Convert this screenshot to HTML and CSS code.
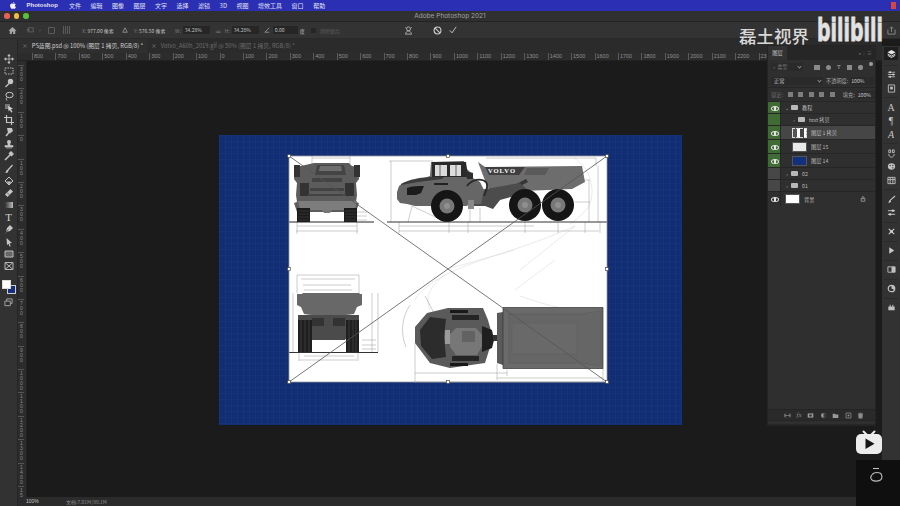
FILE: index.html
```html
<!DOCTYPE html>
<html lang="zh">
<head>
<meta charset="utf-8">
<title>Adobe Photoshop 2021</title>
<link rel="stylesheet" href="styles.css">
</head>
<body>
<div class="app">
  <header class="menubar">
    <svg class="apple" viewBox="0 0 10 12"><path d="M7 0c0 1.300-1 2.600-2.300 2.500C4.600 1.300 5.700.1 7 0zM5 3.200c.6 0 1.300-.6 2.400-.6 1 0 1.800.5 2.300 1.200-2 1.200-1.600 3.900.3 4.700-.5 1.300-1.500 3.300-2.700 3.300-.8 0-1.100-.5-2.100-.5s-1.400.5-2.100.5C1.700 11.800 0 9 0 6.500 0 4 1.600 2.700 3 2.700c1 0 1.500.5 2 .5z"/></svg>
    <span class="menu-app">Photoshop</span>
    <span>文件</span><span>编辑</span><span>图像</span><span>图层</span><span>文字</span><span>选择</span><span>滤镜</span><span>3D</span><span>视图</span><span>增效工具</span><span>窗口</span><span>帮助</span>
    <i class="rec"></i>
  </header>
  <div class="titlebar">
    <i class="light red"></i><i class="light yellow"></i><i class="light green"></i>
    <span class="app-title">Adobe Photoshop 2021</span>
  </div>
  <div class="options">
    <svg class="o-home" viewBox="0 0 10 10"><path d="M5 1 .5 5.200H2V9h2.300V6.500h1.400V9H8V5.200h1.500z" fill="#a8a8a8"/></svg>
    <svg class="o-preset" viewBox="0 0 10 8"><path d="M1 1h7v5.500H1z" fill="none" stroke="#6a6a6a"/><path d="M0 3h3v2H0z" fill="#6a6a6a"/></svg>
    <svg class="o-caret" viewBox="0 0 6 4"><path d="M1 1l2 2 2-2" fill="none" stroke="#5c5c5c"/></svg>
    <i class="o-box"></i>
    <i class="o-ref"></i>
    <span class="o-text o-x"><em>X:</em> 977.00 像素</span>
    <svg class="o-tri" viewBox="0 0 8 8"><path d="M4 1 7 7H1z" fill="none" stroke="#a0a0a0"/></svg>
    <span class="o-text o-y"><em>Y:</em> 576.50 像素</span>
    <span class="o-text o-w"><em>W:</em><b class="field f-w">34.28%</b></span>
    <span class="o-text o-link">∞</span>
    <span class="o-text o-h"><em>H:</em><b class="field f-w">34.28%</b></span>
    <svg class="o-angle" viewBox="0 0 8 8"><path d="M7 1 1 7h6" fill="none" stroke="#a0a0a0"/></svg>
    <b class="o-text field f-a">0.00</b>
    <span class="o-text o-deg">度</span>
    <i class="o-check"></i>
    <span class="o-text o-aa">消除锯齿</span>
    <svg class="o-warp" viewBox="0 0 10 10"><circle cx="5" cy="3.200" r="2.200" fill="none" stroke="#b4b4b4"/><path d="M1.500 1.500 3 3M8.500 1.500 7 3M1.500 9c1-2.500 2-3.500 3.500-3.500S7.500 6.500 8.500 9z" fill="none" stroke="#b4b4b4"/></svg>
    <svg class="o-cancel" viewBox="0 0 10 10"><circle cx="5" cy="5" r="3.800" fill="none" stroke="#d0d0d0" stroke-width="1.200"/><path d="M2.400 2.400l5.200 5.200" stroke="#d0d0d0" stroke-width="1.200"/></svg>
    <svg class="o-ok" viewBox="0 0 10 10"><path d="M1 5.500 3.800 8.500 9 1" fill="none" stroke="#e0e0e0" stroke-width="1"/></svg>
    <svg class="o-share" viewBox="0 0 10 10"><path d="M1 4v5h8V4M5 6.500V1M3.200 2.800 5 1l1.800 1.800" fill="none" stroke="#8c8c8c"/></svg>
  </div>
  <div class="main">
    <aside class="tools">
      <div class="tool-list">
        <svg viewBox="0 0 10 10"><path d="M5 .5v9M.5 5h9M5 .5 3.800 2h2.400zM5 9.500 3.800 8h2.400zM.5 5 2 3.800v2.400zM9.500 5 8 3.800v2.400z" stroke="#c4c4c4" fill="#c4c4c4" stroke-width=".7"/></svg>
        <svg viewBox="0 0 10 10"><path d="M1 2h8v6H1z" fill="none" stroke="#b4b4b4" stroke-dasharray="1.500 1"/></svg>
        <svg viewBox="0 0 10 10"><circle cx="6.500" cy="3.500" r="2.700" fill="#c4c4c4"/><path d="M5 5.500 1.500 9" stroke="#c4c4c4" stroke-width="1.200"/></svg>
        <svg viewBox="0 0 10 10"><ellipse cx="5.500" cy="4" rx="3.700" ry="2.700" fill="none" stroke="#c4c4c4"/><path d="M3 6.500c-1 1-1 2 0 3" fill="none" stroke="#c4c4c4"/></svg>
        <svg viewBox="0 0 10 10"><path d="M1 1h5v5H1z" fill="#777"/><path d="M4 3l5 2.500-2 .7L8.500 9 7 9.500 6 7l-1.500 1.200z" fill="#d0d0d0"/></svg>
        <svg viewBox="0 0 10 10"><path d="M2.500 0v7.500H10M0 2.500h7.500V10" fill="none" stroke="#c4c4c4" stroke-width="1.200"/></svg>
        <svg viewBox="0 0 10 10"><path d="M3 1h5l1 3-3 2.500L4 6z" fill="#c4c4c4"/><path d="M4.500 6 2 9" stroke="#c4c4c4" stroke-width="1.500"/></svg>
        <svg viewBox="0 0 10 10"><circle cx="5" cy="3" r="2" fill="#c4c4c4"/><path d="M4 4.500h2v2H9V8H1V6.500h3zM2 9h6" stroke="#c4c4c4" stroke-width=".6" fill="#c4c4c4"/></svg>
        <svg viewBox="0 0 10 10"><path d="M7 1 9 3 7.500 4.500l-2-2zM6 4 2 8l-1 1" stroke="#c4c4c4" stroke-width="1.500" fill="#c4c4c4"/></svg>
        <svg viewBox="0 0 10 10"><path d="M8.500 1 4 6" stroke="#c4c4c4" stroke-width="1.200"/><path d="M3.500 5.500C2 6 2.500 8 1 8.800c2 .6 3.500-.6 3.500-2.300z" fill="#c4c4c4"/></svg>
        <svg viewBox="0 0 10 10"><path d="M1 5 5 1l4 4-4 4z" fill="none" stroke="#c4c4c4"/><path d="M2.500 5.500h5L5 8.500z" fill="#c4c4c4"/></svg>
        <svg viewBox="0 0 10 10"><path d="M1 6.500 6.500 1 9 3.500 3.500 9z" fill="#c4c4c4"/><path d="M3 4.500 5.500 7" stroke="#666"/></svg>
        <svg class="grad" viewBox="0 0 10 10"><defs><linearGradient id="g"><stop offset="0" stop-color="#333"/><stop offset="1" stop-color="#bbb"/></linearGradient></defs><path d="M1 2h8v6H1z" fill="url(#g)"/></svg>
        <span class="tool-t">T</span>
        <svg viewBox="0 0 10 10"><path d="M2 8 3 4l3-3 3 3-3 3z" fill="#c4c4c4"/><path d="M1 9.500 4.500 5.500" stroke="#555"/></svg>
        <svg viewBox="0 0 10 10"><path d="M2.500 1 8 6l-2.300.2 1 3-1.200.4-1-2.800L3 8z" fill="#c4c4c4"/></svg>
        <svg viewBox="0 0 10 10"><path d="M1 2h8v6H1z" fill="#666" stroke="#bbb"/></svg>
        <svg viewBox="0 0 10 10"><path d="M1 1.500h8v7H1zM1 1.500l8 7M9 1.500l-8 7" fill="none" stroke="#b4b4b4"/></svg>
      </div>
      <div class="swatches"><i class="bg-swatch"></i><i class="fg-swatch"></i></div>
      <svg class="screen-mode" viewBox="0 0 10 10"><path d="M3 1h6v5H3z" fill="none" stroke="#aaa"/><path d="M1 3.500h6v5H1z" fill="#2e2e2e" stroke="#aaa"/></svg>
    </aside>
    <section class="work">
      <nav class="tabs">
        <span class="tab tab-active"><i>×</i>PS蓝图.psd @ 100% (图层 1 拷贝, RGB/8) *</span>
        <span class="tab"><i>×</i>Volvo_A60h_2019.gif @ 50% (图层 1 拷贝, RGB/8) *</span>
      </nav>
      <div class="hruler">
        <span>800</span><span>700</span><span>600</span><span>500</span><span>400</span><span>300</span><span>200</span><span>100</span><span>0</span><span>100</span><span>200</span><span>300</span><span>400</span><span>500</span><span>600</span><span>700</span><span>800</span><span>900</span><span>1000</span><span>1100</span><span>1200</span><span>1300</span><span>1400</span><span>1500</span><span>1600</span><span>1700</span><span>1800</span><span>1900</span><span>2000</span><span>2100</span><span>2200</span><span>2300</span>
      </div>
      <div class="stage-row">
        <div class="vruler">
          <span>300</span><span>200</span><span>100</span><span>0</span><span>100</span><span>200</span><span>300</span><span>400</span><span>500</span><span>600</span><span>700</span><span>800</span><span>900</span><span>1000</span><span>1100</span><span>1200</span><span>1300</span><span>1400</span><span>15</span>
        </div>
        <div class="stage">
          <div class="document">
            <svg class="artwork" viewBox="219 135 463 290">
              <rect x="289" y="156" width="318" height="226" fill="#fff"/>
              <!-- faint swing arcs -->
              <g fill="none" stroke="#d4d4d4" stroke-width=".5">
                <path d="M574 158c14 8 22 28 16 46-4 8-12 14-20 20M450 268c40-10 90-26 125-42M520 270l55-44"/>
                <path d="M415 300c5-10 25-30 100-50M520 296c40 14 50 14 82 14M515 290l40-30M430 310c-6-14 2-26 16-36"/>
              </g>
              <!-- dimension lines -->
              <g fill="none" stroke="#9a9a9a" stroke-width=".5">
                <path d="M312 158h38M312 156v8M350 156v8M297 226h60M296 231h62M297 222v12M357 222v12M345 212h22M345 216h22M345 220h22"/>
                <path d="M391 161v61M389 161h44M486 158h110M596 158v8M598 166v56M589 180v42M574 180h16M575 202h15M399 226h135M399 231h200M399 222v11M449 222v11M468 222v11M525 222v11M558 222v11M585 222v11M600 222v11M408 222l4-16M412 206l34 16M470 222v-14M480 208v14"/>
                <path d="M297 275h62M301 279h54M303 285h48M304 290h48M297 275v18M359 275v18M378 293v59M372 293v59M293 293v59M362 340h14M362 345h14M362 349h14M304 356h50M299 360h58M299 352v9M358 352v9"/>
                <path d="M415 373h92M497 378h105M415 382h188M507 370v6M497 364v16M603 368v14M415 343v40M410 305c-8 12-10 28-4 42M425 296l16 30"/>
              </g>
              <!-- front view -->
              <path d="M314 163h35l3 3 6 1 1 12-3 4 1 12-1 7 3 1-3 9h-59l-3-9 3-1-1-7 1-12-3-4 1-12 6-1z" fill="#5c5c5c"/>
              <path d="M317 165h27l2 10h-31z" fill="#444"/>
              <path d="M320 166h21l1 5h-23z" fill="#6e6e6e"/>
              <path d="M294 165h6v12h-6zM354 165h6v12h-6zM300 183h9v13h-9zM345 183h9v13h-9z" fill="#333"/>
              <path d="M312 178h30v4h-30zM310 188h34v3h-34zM308 194h38v2h-38z" fill="#434343"/>
              <path d="M298 201h59l-2 9h-55z" fill="#7d7d7d"/>
              <path d="M297 208h13v14h-13zM344 208h13v14h-13z" fill="#1c1c1c"/>
              <path d="M298 211h11M298 214h11M298 217h11M298 220h11M345 211h11M345 214h11M345 217h11M345 220h11" stroke="#4a4a4a" stroke-width=".5"/>
              <path d="M322 210h10l-2 3h-6z" fill="#777"/>
              <path d="M289 222h85" stroke="#222" stroke-width="1"/>
              <!-- side view: tipper -->
              <path d="M478 162l7 5 97-1 3 16-13 7-24 1-58 2-6-14z" fill="#6d6d6d"/>
              <path d="M485 167h40l-6 8h-30z" fill="#3f3f3f"/>
              <path d="M527 168h22l-4 7h-21z" fill="#5a5a5a"/>
              <path d="M486 200 526 179l2 3-40 21z" fill="#353535"/>
              <path d="M485 206h-12l-3-4 10-12 40-7 10 9-30 8-7 9z" fill="#4c4c4c"/>
              <!-- side view: cab and hood -->
              <path d="M397 192l2-6 4-3c8-4 15-5 24-6l3-1 1-14 33-1 3 8 5 5-1 3 9 5 4 8-3 14h-12l-2 2H415l-8-2-7-1-3-4z" fill="#666"/>
              <path d="M432 162h34l2 15h-36z" fill="#2a2a2a"/>
              <path d="M435 165h12v11h-12zM450 165h11v11h-11z" fill="#dcdcdc"/>
              <path d="M440 165v11M456 165v11" stroke="#333" stroke-width=".7"/>
              <path d="M466 171l7 2v6h-6z" fill="#2e2e2e"/>
              <path d="M407 188c5-2 12-2 17-2l-3 7-5 2h-9z" fill="#1c1c1c"/>
              <path d="M401 184c8-4 20-6 30-7l13 0-2 2-24 3-17 3z" fill="#3b3b3b"/>
              <path d="M434 183h14v2h-14z" fill="#222"/>
              <path d="M467 186c5-7 15-8 19-4 3 4 0 9-2 14" fill="none" stroke="#2a2a2a" stroke-width="1.800"/>
              <path d="M468 200h6v9h-6z" fill="#8a8a8a"/>
              <text class="volvo" x="488" y="173">VOLVO</text>
              <g fill="#151515"><circle cx="447" cy="206" r="16"/><circle cx="525" cy="205" r="16"/><circle cx="558" cy="205" r="16"/></g>
              <g fill="#787878"><circle cx="447" cy="206" r="7.500"/><circle cx="525" cy="205" r="7.500"/><circle cx="558" cy="205" r="7.500"/></g>
              <g fill="#8f8f8f"><circle cx="447" cy="206" r="3"/><circle cx="525" cy="205" r="3"/><circle cx="558" cy="205" r="3"/></g>
              <path d="M387 222h221" stroke="#333" stroke-width="1"/>
              <!-- rear view -->
              <path d="M297 294h5l1-1h56l1 1h2l0 11-5 2-3 7c-14 2-37 2-50 0l-3-7-4-2z" fill="#686868"/>
              <path d="M298 315h61v5l-14 20h-33l-14-20z" fill="#4b4b4b"/>
              <path d="M312 318h12v8h-12zM333 318h12v8h-12z" fill="#333"/>
              <path d="M298 320h14v32h-14zM346 320h13v32h-13z" fill="#1f1f1f"/>
              <path d="M301 320v32M305 320v32M309 320v32M349 320v32M353 320v32M356 320v32" stroke="#555" stroke-width=".5"/>
              <path d="M289 352.500h89" stroke="#333"/>
              <!-- top view: cab -->
              <path d="M415 327l12-14 21-5h35l5 12 5 18-8 25-35 5-20-5-15-20z" fill="#5a5a5a"/>
              <path d="M420 330l10-13 16 2-2 18 2 20-14 2-11-13z" fill="#2c2c2c"/>
              <path d="M450 310h18v3h-18zM450 363h18v3h-18z" fill="#191919"/>
              <path d="M452 315h27v5h-27zM452 356h27v5h-27z" fill="#252525"/>
              <path d="M450 334l6-6h20l7 8v9l-6 10h-21l-6-8z" fill="#777"/>
              <path d="M462 331h13v11h-13z" fill="#626262"/>
              <path d="M445 330h5v14h-5z" fill="#9a9a9a"/>
              <path d="M482 326l10 4 2 10-2 8-10 4z" fill="#1f1f1f"/>
              <path d="M493 335h4v6h-4z" fill="#333"/>
              <path d="M497 313l6-1v53l-6-2z" fill="#5a5a5a"/>
              <!-- top view: tipper -->
              <path d="M503 307.500h100v61h-100z" fill="#6a6a6a" stroke="#333" stroke-width=".7"/>
              <path d="M509 314h72l20-3v55l-20-3h-72z" fill="#666" stroke="#5a5a5a" stroke-width=".5"/>
              <path d="M512 323h65v31h-65z" fill="#696969" stroke="#5c5c5c" stroke-width=".5"/>
              <!-- transform -->
              <g fill="none" stroke="#555" stroke-width=".8">
                <path d="M289 156 607 382M607 156 289 382"/>
                <path d="M289 156h318v226H289z" stroke="#999"/>
              </g>
              <g fill="#fff" stroke="#333" stroke-width=".6">
                <rect x="287.500" y="154.500" width="3" height="3"/><rect x="446.500" y="154.500" width="3" height="3"/><rect x="605.500" y="154.500" width="3" height="3"/>
                <rect x="287.500" y="267.500" width="3" height="3"/><rect x="605.500" y="267.500" width="3" height="3"/>
                <rect x="287.500" y="380.500" width="3" height="3"/><rect x="446.500" y="380.500" width="3" height="3"/><rect x="605.500" y="380.500" width="3" height="3"/>
              </g>
            </svg>
          </div>
        </div>
      </div>
      <footer class="statusbar"><span class="zoom-val">100%</span><span class="doc-val">文档:7.01M/99.1M</span></footer>
    </section>
    <aside class="dock">
      <span class="dock-active"><svg viewBox="0 0 10 10"><path d="M5 1 9.500 3.500 5 6 .5 3.500z" fill="#e4e4e4"/><path d="M.8 5.500 5 8l4.200-2.500M.8 7 5 9.500 9.200 7" fill="none" stroke="#e4e4e4"/></svg></span>
      <i class="dock-sep"></i>
      <svg viewBox="0 0 10 10"><path d="M1 2.500h8M1 5h8M1 7.500h8" stroke="#b0b0b0"/><circle cx="3.500" cy="2.500" r="1" fill="#ddd"/><circle cx="7" cy="5" r="1" fill="#ddd"/><circle cx="3.500" cy="7.500" r="1" fill="#ddd"/></svg>
      <svg viewBox="0 0 10 10"><path d="M1.500 1h7v8h-7z" fill="none" stroke="#c0c0c0"/><path d="M3.500 3h3v3h-3z" fill="#c0c0c0"/></svg>
      <i class="dock-sep"></i>
      <span class="dock-a">A</span>
      <span class="dock-a">¶</span>
      <span class="dock-a dock-i">A</span>
      <i class="dock-sep"></i>
      <svg viewBox="0 0 10 10"><path d="M2 1h2v3H2zM6 1h2v3H6zM2 5.500c0 2 1 3.500 3 3.500s3-1.500 3-3.500" fill="none" stroke="#c0c0c0"/></svg>
      <svg viewBox="0 0 10 10"><ellipse cx="5" cy="5" rx="4" ry="3.500" fill="#c0c0c0"/><circle cx="3.500" cy="4" r=".8" fill="#333"/><circle cx="6.500" cy="4" r=".8" fill="#333"/><circle cx="6.500" cy="6.500" r=".8" fill="#333"/></svg>
      <svg viewBox="0 0 10 10"><path d="M1 1.500h8v7H1zM1 4h8M3.500 1.500v7M6.500 1.500v7" fill="none" stroke="#c0c0c0"/></svg>
      <i class="dock-sep"></i>
      <svg viewBox="0 0 10 10"><path d="M9 1 3.500 6" stroke="#d0d0d0" stroke-width="1.200"/><path d="M3 5.500C2 6.500 2.500 8 1 9c2 0 3.500-.8 3.500-2.500z" fill="#d0d0d0"/></svg>
      <svg viewBox="0 0 10 10"><path d="M1 3h8M1 7h8" stroke="#d0d0d0"/><circle cx="6.500" cy="3" r="1.300" fill="#d0d0d0"/><circle cx="3.500" cy="7" r="1.300" fill="#d0d0d0"/></svg>
      <i class="dock-sep"></i>
      <svg viewBox="0 0 10 10"><path d="M2 2l6 6M8 2 2 8" stroke="#d0d0d0" stroke-width="1.200"/><circle cx="5" cy="5" r="1.500" fill="#d0d0d0"/></svg>
      <i class="dock-sep"></i>
      <svg viewBox="0 0 10 10"><path d="M2.500 1.500 8 5 2.500 8.500z" fill="#c8c8c8"/></svg>
      <i class="dock-sep"></i>
      <svg viewBox="0 0 10 10"><path d="M1 2h8v6H1z" fill="none" stroke="#c0c0c0"/><path d="M5 2h4v6H5z" fill="#c0c0c0"/></svg>
      <i class="dock-sep"></i>
      <svg viewBox="0 0 10 10"><circle cx="5" cy="5" r="3.600" fill="none" stroke="#c0c0c0" stroke-width="1.400"/><path d="M5 1.500a3.500 3.500 0 0 1 3 5.300L5 5z" fill="#c0c0c0"/></svg>
      <i class="dock-sep"></i>
      <svg viewBox="0 0 10 10"><path d="M1.500 4h7v4h-7zM3 2h1v2H3zM6 2h1v2H6z" fill="#c0c0c0"/></svg>
    </aside>
    <section class="layers">
      <div class="layers-head"><span class="layers-tab">图层</span><span class="layers-more">» <u>|</u> ≡</span></div>
      <div class="lp-row lp-search">
        <span class="lp-select lp-kind">⌕ 类型<i></i></span>
        <span class="filter-icons"><b class="fi"></b><b class="fi fi-round"></b><span class="fi-t">T</span><b class="fi fi-hollow"></b><b class="fi fi-alt"></b><b class="fi-dot"></b></span>
      </div>
      <div class="lp-row lp-blend">
        <span class="lp-select lp-normal">正常<i></i></span>
        <span class="lp-label">不透明度:</span><span class="lp-val">100%</span><b class="lp-arrow"></b>
      </div>
      <div class="lp-row lp-lock">
        <span class="lp-label dim">锁定:</span><span class="lock-icons"><b></b><b></b><b></b><b></b><b></b></span>
        <span class="lp-label">填充:</span><span class="lp-val">100%</span><b class="lp-arrow"></b>
      </div>
      <ul class="layer-list">
        <li class="layer h12"><i class="eye on"></i><span class="arr">⌄</span><i class="folder"></i><span>教程</span></li>
        <li class="layer h12 deep"><i class="eye green"></i><span class="arr">›</span><i class="folder light-f"></i><span>text 拷贝</span></li>
        <li class="layer h14 selected"><i class="eye on"></i><i class="thumb thumb-art"></i><span>图层 1 拷贝</span></li>
        <li class="layer h14"><i class="eye on"></i><i class="thumb thumb-grey"></i><span>图层 15</span></li>
        <li class="layer h14"><i class="eye on"></i><i class="thumb thumb-blue"></i><span>图层 14</span></li>
        <li class="layer h12 top"><i class="eye grey"></i><span class="arr">›</span><i class="folder"></i><span>02</span></li>
        <li class="layer h12 top"><i class="eye grey"></i><span class="arr">›</span><i class="folder"></i><span>01</span></li>
        <li class="layer h14 bg-layer"><i class="eye on plain"></i><i class="thumb thumb-white"></i><span>背景</span><svg class="lock" viewBox="0 0 8 8"><path d="M1.500 3.500h5V7h-5zM2.800 3.500V2a1.200 1.200 0 0 1 2.400 0v1.500" fill="none" stroke="#a8a8a8"/></svg></li>
      </ul>
      <div class="layers-foot">
        <svg viewBox="0 0 10 10"><path d="M1 5h8M3 3H1v4h2M7 3h2v4H7" fill="none" stroke="#8c8c8c"/></svg>
        <span>fx</span>
        <svg viewBox="0 0 10 10"><path d="M1 2h8v6H1z" fill="#9a9a9a"/><circle cx="5" cy="5" r="1.800" fill="#333"/></svg>
        <svg viewBox="0 0 10 10"><circle cx="5" cy="5" r="3.500" fill="#9a9a9a"/><path d="M5 1.500a3.500 3.500 0 0 1 0 7z" fill="#333"/></svg>
        <svg viewBox="0 0 10 10"><path d="M1 2.500h3l1 1h4v5H1z" fill="#9a9a9a"/></svg>
        <svg viewBox="0 0 10 10"><path d="M1.500 1.500h7v7h-7zM5 3.500v3M3.500 5h3" fill="none" stroke="#9a9a9a"/></svg>
        <svg viewBox="0 0 10 10"><path d="M2 2.500h6L7.500 9h-5zM1.500 2h7M4 1h2" fill="#8c8c8c" stroke="#8c8c8c" stroke-width=".6"/></svg>
      </div>
    </section>
    <div class="watermark"><span class="wm-cn">磊土视界</span><span class="wm-logo">bilibili</span></div>
    <svg class="tv-badge" viewBox="0 0 26 24"><path d="M7.500 1.500l3.500 3.500M18.500 1.500 15 5" stroke="#ececec" stroke-width="2" stroke-linecap="round"/><rect x="0" y="4" width="26" height="20" rx="5" fill="#ececec"/><path d="M9.500 8.500v10.500l9-5.200z" fill="#151515"/></svg>
    <div class="corner-box"><svg viewBox="0 0 16 16"><path d="M5 1.500h6" stroke="#bdbdbd" stroke-width="1.100"/><path d="M4 7.500c2-2 5-2.500 8-1.500 2.500 1.500 2.500 5.500.5 7-2.500 1.500-6.500 1.500-8.500 0-1.500-1.500-1.500-3.500 0-5" fill="none" stroke="#bdbdbd" stroke-width="1.100"/></svg></div>
  </div>
</div>
</body>
</html>
```
FILE: styles.css
```css
* { box-sizing: border-box; }
html, body { margin: 0; padding: 0; }
body { background: #1b1b1b; font-family: "Noto Sans CJK SC", "Liberation Sans", sans-serif; overflow: hidden; }
ul { list-style: none; margin: 0; padding: 0; }
i, em, b { font-style: normal; font-weight: normal; }
.app { width: 900px; height: 506px; display: flex; flex-direction: column; overflow: hidden; }

.menubar { height: 11px; background: #2a2fb3; color: #e3e4f3; font-size: 6px; line-height: 11px; display: flex; align-items: center; gap: 9.500px; padding-left: 10px; flex: none; }
.apple { width: 6px; height: 7px; fill: #f2f2f2; margin-right: 1px; }
.menu-app { font-family: "Liberation Sans", sans-serif; font-weight: 700; width: 33px; }
.rec { width: 5px; height: 7px; background: #d8453e; margin-left: auto; margin-right: 4px; }

.titlebar { height: 11px; background: #303030; border-bottom: 1px solid #232323; display: flex; align-items: center; position: relative; padding-left: 4px; gap: 4px; flex: none; }
.light { width: 5.500px; height: 5.500px; border-radius: 50%; }
.red { background: #ee5f57; }
.yellow { background: #f5bb3c; }
.green { background: #57c13c; }
.app-title { position: absolute; left: 0; right: 0; text-align: center; font: 6.500px "Inter", sans-serif; color: #a3a3a3; }

.options { height: 17px; background: #333; display: flex; align-items: center; flex: none; font-size: 5px; color: #a6a6a6; border-bottom: 1px solid #2a2a2a; }
.options svg { flex: none; }
.o-home { width: 9px; height: 9px; margin-left: 8px; }
.o-preset { width: 8px; height: 6px; margin-left: 10px; }
.o-caret { width: 4px; height: 3px; margin-left: 3px; }
.o-box { width: 7px; height: 7px; border: 1px solid #5c5c5c; border-radius: 1px; margin-left: 6px; }
.o-ref { width: 8px; height: 8px; margin-left: 8px; background: repeating-linear-gradient(90deg, #5a5a5a 0 1px, #333 1px 2px); }
.o-text { white-space: nowrap; color: #c2c2c2; }
.o-text em { color: #7b7b7b; }
.o-x { margin-left: 11px; width: 35px; }
.o-tri { width: 6px; height: 6px; margin-left: 5px; }
.o-y { margin-left: 6px; width: 36px; }
.o-w { margin-left: 5px; display: flex; align-items: center; gap: 2px; }
.o-link { margin-left: 6px; color: #888; width: 7px; }
.o-h { margin-left: 2px; display: flex; align-items: center; gap: 2px; }
.field { background: #262626; height: 8px; line-height: 8px; padding-left: 2px; display: block; color: #c2c2c2; }
.f-w { width: 27px; }
.f-a { width: 25px; margin-left: 3px; }
.o-angle { width: 6px; height: 6px; margin-left: 5px; }
.o-deg { margin-left: 2px; width: 6px; }
.o-check { width: 5px; height: 5px; background: #262626; margin-left: 5px; }
.o-aa { margin-left: 4px; color: #5e5e5e; width: 20px; }
.o-warp { width: 9px; height: 9px; margin-left: 64px; }
.o-cancel { width: 9px; height: 9px; margin-left: 20px; }
.o-ok { width: 8px; height: 8px; margin-left: 7px; }
.o-share { width: 9px; height: 9px; margin-left: 430px; }

.main { flex: 1; display: flex; position: relative; min-height: 0; }
.tools { width: 18px; background: #323232; border-right: 1px solid #262626; display: flex; flex-direction: column; align-items: center; padding-top: 15px; flex: none; }
.tool-list { display: flex; flex-direction: column; align-items: center; gap: 2.180px; }
.tool-list svg { width: 10px; height: 10px; flex: none; }
.tool-t { height: 10px; width: 10px; text-align: center; font: 11px/10px "Liberation Serif", serif; color: #d0d0d0; }
.swatches { position: relative; width: 14px; height: 14px; margin-top: 9px; flex: none; }
.fg-swatch { position: absolute; left: 0; top: 0; width: 9px; height: 9px; background: #fff; border: 1px solid #ddd; }
.bg-swatch { position: absolute; left: 5px; top: 5px; width: 9px; height: 9px; background: #14307e; border: 1px solid #ccc; }
.screen-mode { width: 9px; height: 9px; margin-top: 4px; flex: none; }

.work { flex: 1; min-width: 0; display: flex; flex-direction: column; background: #1b1b1b; }
.tabs { height: 14px; background: #2b2b2b; display: flex; align-items: center; font-size: 5.800px; color: #6e6e6e; flex: none; }
.tab { height: 14px; line-height: 14px; padding-left: 4px; white-space: nowrap; display: block; }
.tab i { margin-right: 4px; color: #777; }
.tab-active { color: #d2d2d2; background: #2f2f2f; width: 129px; }
.tab + .tab { padding-left: 4px; color: #6b6b6b; }

.hruler { height: 8px; background: #2c2c2c; padding-left: 14px; display: flex; flex: none; overflow: hidden; border-bottom: 1px solid #222; }
.hruler span { flex: none; width: 23.450px; height: 7px; border-left: 1px solid #5a5a5a; padding-left: 1px; font: 5.500px/7px "Liberation Sans", sans-serif; color: #8f8f8f; }
.stage-row { flex: 1; display: flex; min-height: 0; }
.vruler { width: 9px; background: #2c2c2c; padding-top: 4px; overflow: hidden; flex: none; border-right: 1px solid #222; }
.vruler span { display: block; height: 23.400px; border-top: 1px solid #555; padding: 1px 0 0 2px; font: 5px/5px "Liberation Sans", sans-serif; color: #8c8c8c; width: 6px; word-break: break-all; }
.stage { flex: 1; position: relative; background: #1b1b1b; }
.document { position: absolute; left: 192px; top: 74px; width: 463px; height: 290px; background-color: #112e75; background-image: linear-gradient(rgba(255,255,255,.015) 1px, transparent 1px), linear-gradient(90deg, rgba(255,255,255,.02) 1px, transparent 1px); background-size: 6px 6px; }
.artwork { display: block; width: 463px; height: 290px; }
.volvo { font: 700 6.500px "Liberation Serif", serif; fill: #fff; letter-spacing: 1px; }
.statusbar { height: 9px; background: #2b2b2b; font-size: 5px; line-height: 9px; color: #a8a8a8; display: flex; flex: none; }
.zoom-val { width: 20px; color: #c4c4c4; font-family: "Liberation Sans", sans-serif; margin-left: 8px; }
.doc-val { margin-left: 20px; color: #8c8c8c; }

.dock { width: 18px; margin-top: 7px; background: #323232; display: flex; flex-direction: column; align-items: center; gap: 4.500px; padding-top: 1px; flex: none; }
.dock svg { width: 9px; height: 9px; flex: none; }
.dock-active { width: 14px; height: 13px; background: #1e1e1e; display: flex; align-items: center; justify-content: center; }
.dock-sep { width: 14px; height: 1px; background: #2a2a2a; flex: none; }
.dock-a { font: 10px/9px "Liberation Serif", serif; color: #c4c4c4; height: 9px; }
.dock-i { font-style: italic; }

.layers { position: absolute; left: 768px; top: 7px; width: 107px; height: 379px; background: #2f2f2f; border-bottom: 1px solid #262626; display: flex; flex-direction: column; font-size: 5.200px; color: #b4b4b4; box-shadow: 0 0 0 1px #242424; }
.layers-head { height: 14px; background: #262626; display: flex; justify-content: space-between; align-items: stretch; flex: none; }
.layers-tab { width: 19px; background: #323232; text-align: center; line-height: 14px; color: #c8c8c8; }
.layers-more { line-height: 14px; padding-right: 3px; color: #8e8e8e; word-spacing: 1px; }
.layers-more u { text-decoration: none; color: #555; }
.lp-row { display: flex; align-items: center; flex: none; padding-left: 3px; }
.lp-search { height: 14px; }
.lp-select { background: #3a3a3a; height: 8px; line-height: 8px; padding-left: 2px; position: relative; display: block; color: #a4a4a4; }
.lp-select i { position: absolute; right: 2px; top: 2px; width: 3px; height: 3px; border-right: 1px solid #888; border-bottom: 1px solid #888; transform: rotate(45deg); }
.lp-kind { width: 32px; background: #2a2a2a; color: #777; }
.filter-icons { display: flex; align-items: center; gap: 6px; margin-left: 11px; }
.fi { width: 6px; height: 5px; background: #8a8a8a; display: block; }
.fi-round { border-radius: 50%; width: 5px; }
.fi-t { font: 700 6px/6px "Liberation Sans", sans-serif; color: #8a8a8a; }
.fi-hollow { width: 5px; height: 5px; border: 1px solid #8a8a8a; display: block; }
.fi-alt { width: 5px; height: 5px; background: #8a8a8a; border-radius: 2px; display: block; }
.fi-dot { width: 4px; height: 4px; border-radius: 50%; background: #9a9a9a; display: block; margin-top: -6px; }
.lp-blend { height: 14px; border-bottom: 1px solid #262626; }
.lp-normal { width: 52px; background: #2a2a2a; color: #c8c8c8; padding-left: 3px; }
.lp-label { margin-left: 3px; color: #a8a8a8; white-space: nowrap; }
.lp-label.dim { margin-left: 0; color: #6c6c6c; }
.lp-val { margin-left: 2px; width: 18px; background: #2a2a2a; height: 8px; line-height: 8px; padding-left: 1px; color: #c8c8c8; flex: none; }
.lp-arrow { width: 5px; height: 8px; background: #2a2a2a; margin-left: 1px; }
.lp-lock { height: 14px; border-bottom: 1px solid #262626; }
.lock-icons { display: flex; gap: 5.500px; margin-left: 5px; margin-right: 5px; }
.lock-icons b { width: 5px; height: 5px; background: #7e7e7e; display: block; }
.layer-list { flex: none; }
.layer { display: flex; align-items: center; gap: 2px; border-bottom: 1px solid #262626; color: #bdbdbd; }
.h12 { height: 12px; }
.h14 { height: 14px; }
.selected { background: #464646; }
.eye { width: 13px; align-self: stretch; background: #2f2f2f; border-right: 1px solid #262626; position: relative; display: block; flex: none; }
.eye.on, .eye.green { background: #3f6b34; }
.eye.grey { background: #474747; }
.eye.plain { background: #2f2f2f; }
.eye.on::after { content: ""; position: absolute; left: 3px; top: 50%; width: 6px; height: 3px; margin-top: -2px; border: 1px solid #e4e4e4; border-radius: 50%; background: radial-gradient(circle, #e4e4e4 40%, transparent 45%); }
.arr { width: 4px; color: #a8a8a8; margin-left: 2px; text-align: center; line-height: 5px; }
.deep .arr { margin-left: 9px; }
.folder { width: 7px; height: 5px; background: #b8b8b8; border-radius: 1px; display: block; flex: none; margin-right: 2px; }
.thumb { width: 15px; height: 10px; display: block; flex: none; margin-left: 9px; border: 1px solid #555; margin-right: 2px; }
.thumb-art { background: #fff linear-gradient(90deg, #555 0 4px, #fff 4px 7px, #444 7px 11px, #fff 11px); border: 1px dashed #ddd; }
.thumb-grey { background: #e9e9e9; }
.thumb-blue { background: #12307c; }
.thumb-white { background: #fff; margin-left: 2px; }
.bg-layer { border-bottom: none; }
.lock { width: 6px; height: 6px; margin-left: auto; margin-right: 9px; }
.layers-foot { margin-top: auto; height: 12px; background: #2a2a2a; display: flex; align-items: center; justify-content: flex-end; gap: 5.500px; padding-right: 11px; margin-bottom: 3px; border-top: 1px solid #252525; border-bottom: 1px solid #252525; font: italic 7px/10px "Liberation Serif", serif; color: #8c8c8c; }
.layers-foot svg { width: 7px; height: 7px; }

.watermark { position: absolute; left: 739px; top: -27px; display: flex; align-items: center; gap: 8px; height: 36px; color: #d8d8d8; pointer-events: none; }
.wm-cn { font-size: 17.500px; line-height: 20px; font-weight: 500; white-space: nowrap; margin-top: 11px; }
.wm-logo { font: 700 32px/26px "DejaVu Sans", sans-serif; color: #e2e2e2; display: block; width: 66px; transform: scaleX(.59); transform-origin: left center; -webkit-text-stroke: .8px #e2e2e2; }
.tv-badge { position: absolute; left: 856px; top: 391px; width: 26px; height: 24px; }
.corner-box { position: absolute; right: 0; bottom: 0; width: 44px; height: 46px; background: #0f0f0f; display: flex; align-items: center; justify-content: center; padding: 0 4px 16px 0; }
.corner-box svg { width: 16px; height: 16px; }
```
